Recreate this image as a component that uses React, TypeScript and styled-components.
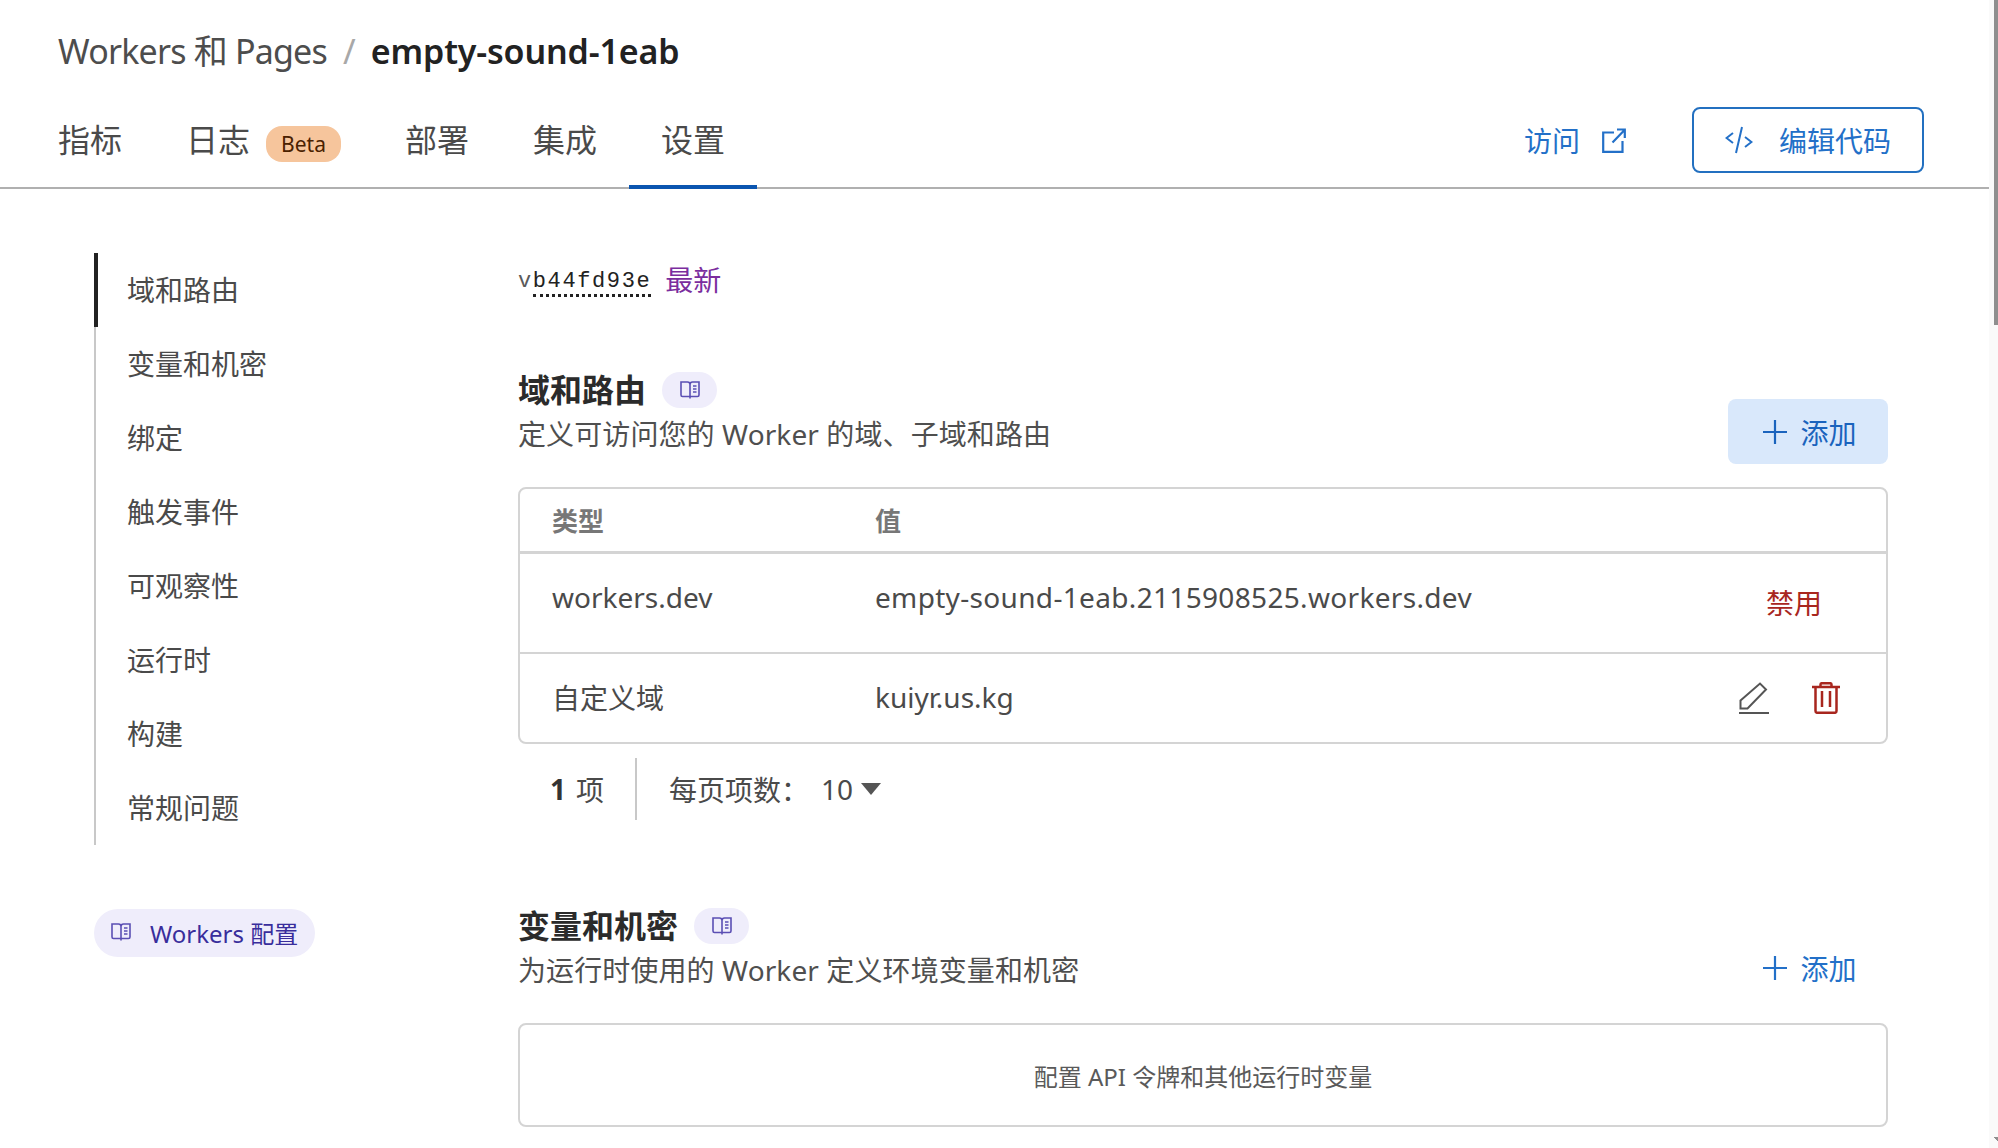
import React from "react";
import styled, { createGlobalStyle } from "styled-components";

const Global = createGlobalStyle`
  html, body { margin: 0; padding: 0; background: #fff; overflow: hidden; }
  body { font-family: "Noto Sans", "Noto Sans CJK SC", sans-serif; color: #4a4a4a; }
  * { box-sizing: border-box; }
`;

const Viewport = styled.div`
  width: 1998px; height: 1148px; display: flex; overflow: hidden; background: #fff;
`;
const Page = styled.div`
  width: 1989px; flex: none; display: flex; flex-direction: column;
`;
const Scrollbar = styled.div`
  width: 9px; flex: none; background: #fafafa; display: flex; flex-direction: column; justify-content: space-between; align-items: flex-end;
`;
const Thumb = styled.div`
  width: 4px; height: 325px; background: #8f8f8f;
`;
const ScrollArrow = styled.div`
  width: 4px; height: 4px; margin-bottom: 7px;
  background: linear-gradient(225deg, #8f8f8f 50%, transparent 50%);
`;
const Header = styled.header`
  border-bottom: 2px solid #b0b0b0; padding: 29px 0 0 58px; height: 189px; flex: none; display: flex; flex-direction: column;
`;
const Breadcrumb = styled.div`
  display: flex; align-items: center; height: 44px; font-size: 34px; line-height: 44px; letter-spacing: -0.8px; color: #4d4d4d;
`;
const Slash = styled.span`
  color: #a8a8a8; margin: 0 16px;
`;
const Current = styled.strong`
  color: #222; font-weight: 600; letter-spacing: -0.15px;
`;
const TabRow = styled.div`
  display: flex; align-items: flex-start; margin-top: 34px; padding-right: 65px;
`;
const Tab = styled.div<{ $active?: boolean }>`
  height: 82px; display: flex; align-items: flex-start; padding: 11px 32px 0; margin-left: -32px; margin-right: 32px;
  font-size: 32px; line-height: 44px; color: #4a4a4a;
  border-bottom: ${(p) => (p.$active ? "4px solid #0a55b0" : "none")};
`;
const Beta = styled.span`
  height: 36px; width: 75px; margin: 8px 0 0 16px; border-radius: 16px; background: #f6c59c; color: #4a2100;
  font-size: 21px; line-height: 36px; text-align: center;
`;
const Spacer = styled.div`
  flex: 1;
`;
const VisitLink = styled.a`
  display: flex; align-items: center; gap: 22px; color: #2370c8; font-size: 28px; height: 66px; margin-right: 66px;
`;
const EditButton = styled.button`
  width: 232px; height: 66px; border: 2px solid #2370c0; border-radius: 8px; background: #fff; color: #2370c8;
  font: inherit; font-size: 28px; display: flex; align-items: center; justify-content: center; gap: 26px; padding: 0;
`;
const Body = styled.div`
  display: flex; padding: 64px 101px 0 94px; flex: 1;
`;
const Side = styled.aside`
  width: 424px; flex: none;
`;
const SideList = styled.nav`
  border-left: 2px solid #c8c8c8; width: 300px;
`;
const SideItem = styled.div<{ $active?: boolean }>`
  height: 74px; display: flex; align-items: center; font-size: 28px; color: #4a4a4a; padding-left: 29px; padding-bottom: 2px;
  margin-left: -2px; border-left: 4px solid ${(p) => (p.$active ? "#222" : "transparent")};
`;
const DocPill = styled.a`
  margin-top: 64px; width: 221px; height: 48px; border-radius: 24px; background: #efedfb; color: #392d9c;
  display: flex; align-items: center; gap: 19px; padding: 0 0 2px 17px; font-size: 24px;
`;
const Main = styled.main`
  flex: 1; min-width: 0;
`;
const VersionRow = styled.div`
  display: flex; align-items: center; height: 44px; margin-top: 4px; gap: 14px;
`;
const Version = styled.span`
  font-family: "Liberation Mono", monospace; font-size: 22px; letter-spacing: 1.6px; color: #222; margin-top: 5px;
`;
const VersionPrefix = styled.span`
  color: #5a5a5a;
`;
const VersionHash = styled.span`
  border-bottom: 3px dotted #222; padding-bottom: 0;
`;
const Latest = styled.span`
  color: #7b2d9e; font-size: 28px;
`;
const Section = styled.section<{ $top: number }>`
  margin-top: ${(p) => p.$top}px;
`;
const SectionHead = styled.div`
  display: flex; justify-content: space-between; align-items: flex-end;
`;
const HeadText = styled.div`
  padding-bottom: 10px;
`;
const TitleRow = styled.div`
  display: flex; align-items: center; gap: 16px; height: 40px;
`;
const Title = styled.h2`
  margin: 0; font-size: 32px; font-weight: 700; color: #2b2b2b; line-height: 40px;
`;
const BookChip = styled.span`
  width: 55px; height: 36px; border-radius: 18px; background: #efedfb; display: flex; align-items: center; justify-content: center;
`;
const Sub = styled.p`
  margin: 4px 0 0; font-size: 28px; line-height: 40px; color: #4f4f4f; letter-spacing: 0.1px;
`;
const AddButton = styled.button<{ $filled?: boolean }>`
  width: 160px; height: 65px; border: 0; border-radius: 8px; background: ${(p) => (p.$filled ? "#d9e8fb" : "transparent")};
  color: ${(p) => (p.$filled ? "#1a63bd" : "#2370c8")}; font: inherit; font-size: 28px; display: flex; align-items: center; justify-content: center; gap: 13px; padding: 0 0 0 4px;
`;
const Table = styled.div`
  border: 2.5px solid #d4d4d4; border-radius: 8px; margin-top: 23px; font-size: 28px; color: #4a4a4a;
`;
const Row = styled.div<{ $h: number }>`
  display: grid; grid-template-columns: 323px 1fr 190px; align-items: center; padding-left: 32px; height: ${(p) => p.$h}px;
`;
const RowRule = styled.div`
  height: 2.5px; background: #d4d4d4;
`;
const HeadCell = styled.div`
  font-size: 26px; font-weight: 700; color: #777;
`;
const RaisedCell = styled.div<{ $spaced?: boolean }>`
  margin-top: -12px; letter-spacing: ${(p) => (p.$spaced ? "0.33px" : "0")};
`;
const NudgedCell = styled.div`
  margin-top: -2px;
`;
const Actions = styled.div`
  display: flex; align-items: center; gap: 43px; padding-left: 43px;
`;
const Disable = styled.span`
  color: #a8261e; font-size: 28px; margin-left: 70px; margin-top: -2px;
`;
const Pager = styled.div`
  display: flex; align-items: center; height: 62px; margin-top: 14px; padding-left: 32px; font-size: 28px; color: #4a4a4a;
`;
const Count = styled.b`
  color: #333; font-weight: 700; margin-right: 10px;
`;
const PagerRule = styled.div`
  width: 2px; height: 62px; background: #c8c8c8; margin: 0 32px 0 31px;
`;
const PerPage = styled.span`
  display: flex; align-items: center;
`;
const PerValue = styled.span`
  margin-left: 12px; margin-right: 8px;
`;
const Caret = styled.span`
  width: 0; height: 0; border-left: 10px solid transparent; border-right: 10px solid transparent; border-top: 12px solid #555;
`;
const EmptyTable = styled.div`
  border: 2.5px solid #d4d4d4; border-radius: 8px; margin-top: 23px; height: 104px; display: flex; align-items: center; justify-content: center;
  font-size: 24px; color: #5a5a5a;
`;

const BookIcon = () => (
  <svg width="20" height="18" viewBox="0 0 20 18" fill="none" stroke="#5b4fb4" strokeWidth="1.6">
    <path d="M1 1h6.500C9 1 10 2 10 3.500V15.500H2.500C1.500 15.500 1 15 1 14zM19 1h-6.500C11 1 10 2 10 3.500V15.500h7.500c1 0 1.500-.5 1.500-1.500z" />
    <path d="M10 15.500V17.500M13 5h3.500M13 8h3.500M13 11h3.500" />
  </svg>
);
const ExternalIcon = () => (
  <svg width="24" height="25" viewBox="0 0 24 25" fill="none" stroke="#2370c8" strokeWidth="2.200">
    <path d="M12 4.500H1.200V23.800H20.500V13" />
    <path d="M10.500 14.500L22.500 2M15 1.500h7.800V10" />
  </svg>
);
const CodeIcon = () => (
  <svg width="28" height="28" viewBox="0 0 28 28" fill="none" stroke="#2370c8" strokeWidth="2">
    <path d="M8 7L1.500 12 8 17M20 11l6.500 5-6.500 5M17 1L11 27" />
  </svg>
);
const PlusIcon = ({ c }: { c: string }) => (
  <svg width="24" height="24" viewBox="0 0 24 24" fill="none" stroke={c} strokeWidth="2.200">
    <path d="M12 0v24M0 12h24" />
  </svg>
);
const PencilIcon = () => (
  <svg width="30" height="32" viewBox="0 0 30 32" fill="none" stroke="#555" strokeWidth="2">
    <path d="M1.500 18.500L21 1.500L27 7.500L8.500 26.500H1.500Z" />
    <path d="M0 31h30" />
  </svg>
);
const TrashIcon = () => (
  <svg width="28" height="32" viewBox="0 0 28 32" fill="none" stroke="#a8261e" strokeWidth="2.500">
    <path d="M0 5h28M8.500 5V2.500Q8.500 1.200 10 1.200h8Q19.500 1.200 19.500 2.500V5M3.500 5v24q0 1.800 1.800 1.800h17.400q1.800 0 1.800-1.800V5M10 9v16M18 9v16" />
  </svg>
);

export default function App() {
  return (
    <Viewport>
      <Global />
      <Page>
        <Header>
          <Breadcrumb>
            Workers 和 Pages<Slash>/</Slash><Current>empty-sound-1eab</Current>
          </Breadcrumb>
          <TabRow>
            <Tab>指标</Tab>
            <Tab>日志<Beta>Beta</Beta></Tab>
            <Tab>部署</Tab>
            <Tab>集成</Tab>
            <Tab $active>设置</Tab>
            <Spacer />
            <VisitLink>访问<ExternalIcon /></VisitLink>
            <EditButton><CodeIcon />编辑代码</EditButton>
          </TabRow>
        </Header>
        <Body>
          <Side>
            <SideList>
              <SideItem $active>域和路由</SideItem>
              <SideItem>变量和机密</SideItem>
              <SideItem>绑定</SideItem>
              <SideItem>触发事件</SideItem>
              <SideItem>可观察性</SideItem>
              <SideItem>运行时</SideItem>
              <SideItem>构建</SideItem>
              <SideItem>常规问题</SideItem>
            </SideList>
            <DocPill><BookIcon />Workers 配置</DocPill>
          </Side>
          <Main>
            <VersionRow>
              <Version><VersionPrefix>v</VersionPrefix><VersionHash>b44fd93e</VersionHash></Version>
              <Latest>最新</Latest>
            </VersionRow>
            <Section $top={69}>
              <SectionHead>
                <HeadText>
                  <TitleRow><Title>域和路由</Title><BookChip><BookIcon /></BookChip></TitleRow>
                  <Sub>定义可访问您的 Worker 的域、子域和路由</Sub>
                </HeadText>
                <AddButton $filled><PlusIcon c="#1a63bd" />添加</AddButton>
              </SectionHead>
              <Table>
                <Row $h={62}><HeadCell>类型</HeadCell><HeadCell>值</HeadCell></Row>
                <RowRule />
                <Row $h={98}><RaisedCell>workers.dev</RaisedCell><RaisedCell $spaced>empty-sound-1eab.2115908525.workers.dev</RaisedCell><Disable>禁用</Disable></Row>
                <RowRule />
                <Row $h={88}><NudgedCell>自定义域</NudgedCell><NudgedCell>kuiyr.us.kg</NudgedCell><Actions><PencilIcon /><TrashIcon /></Actions></Row>
              </Table>
              <Pager>
                <Count>1</Count>项<PagerRule /><PerPage>每页项数：<PerValue>10</PerValue><Caret /></PerPage>
              </Pager>
            </Section>
            <Section $top={86}>
              <SectionHead>
                <HeadText>
                  <TitleRow><Title>变量和机密</Title><BookChip><BookIcon /></BookChip></TitleRow>
                  <Sub>为运行时使用的 Worker 定义环境变量和机密</Sub>
                </HeadText>
                <AddButton><PlusIcon c="#2370c8" />添加</AddButton>
              </SectionHead>
              <EmptyTable>配置 API 令牌和其他运行时变量</EmptyTable>
            </Section>
          </Main>
        </Body>
      </Page>
      <Scrollbar><Thumb /><ScrollArrow /></Scrollbar>
    </Viewport>
  );
}
